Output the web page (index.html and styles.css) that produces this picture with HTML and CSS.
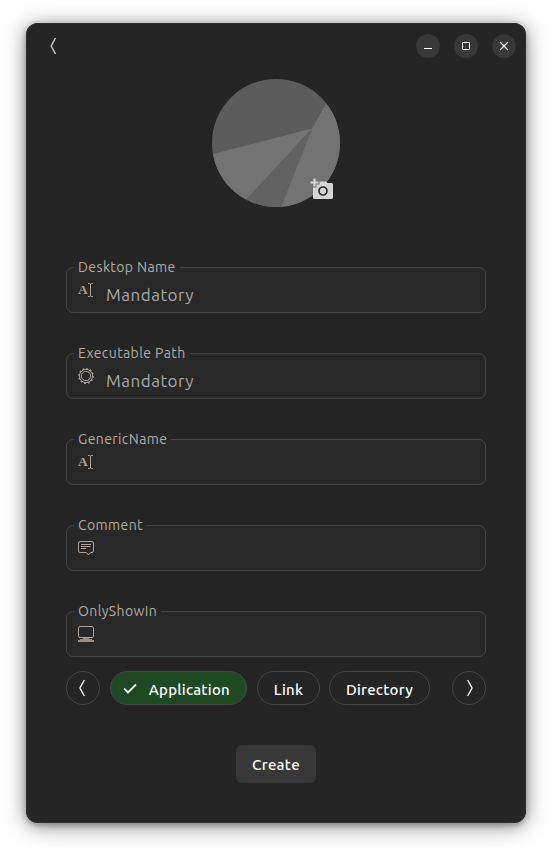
FILE: index.html
```html
<!DOCTYPE html>
<html lang="en">
<head>
<meta charset="utf-8">
<title>Create desktop entry</title>
<link rel="stylesheet" href="styles.css">
</head>
<body>
<main class="window">
  <header class="titlebar">
    <svg class="back" width="16" height="24" viewBox="0 0 16 24"><path d="M11.500 4 7.200 12l4.300 8"/></svg>
    <div class="controls">
      <span class="control"><svg width="24" height="24"><path d="M8 14.500h8"/></svg></span>
      <span class="control"><svg width="24" height="24"><path d="M8.500 8.500h7v7h-7z"/></svg></span>
      <span class="control"><svg width="24" height="24"><path class="cross" d="m8 8 8 8m0-8-8 8"/></svg></span>
    </div>
  </header>
  <div class="avatar">
    <svg width="128" height="128" viewBox="0 0 128 128">
      <defs><clipPath id="disc"><circle cx="64" cy="64" r="64"/></clipPath></defs>
      <g clip-path="url(#disc)">
        <path fill="#5c5c5c" d="M0 0h128v128H0z"/>
        <path fill="#737373" d="M100 49.500-4 76.200V128H28z"/>
        <path fill="#737373" d="M100 49.500 128 0v128H69z"/>
        <path fill="#626262" d="M100 49.500 21.500 134 66 134z"/>
      </g>
    </svg>
    <svg class="camera" width="24" height="22" viewBox="0 0 24 22">
      <path fill="#d4d4d4" d="M9.500 3.500h6.500l1.500 1.500H21.500Q23 5 23 6.500V19.500q0 1.500-1.500 1.500H4.500Q3 21 3 19.500V9.500H6.500V6.500H9.500z"/>
      <circle cx="13" cy="13" r="4" stroke="#2b2b2b" stroke-width="1.700"/>
      <path d="M4.500 .500v8M.500 4.500h8" stroke="#d4d4d4" stroke-width="2.200"/>
    </svg>
  </div>
  <form class="form">
    <fieldset class="field"><legend>Desktop Name</legend>
      <svg class="icon" width="16" height="16"><text class="letter" x="0" y="12">A</text><path d="M10 1.500h1.500q1 0 1 1 0-1 1-1H15M12.500 2v12M10 14.500h1.500q1 0 1-1 0 1 1 1H15"/></svg>
      <span class="value">Mandatory</span></fieldset>
    <fieldset class="field"><legend>Executable Path</legend>
      <svg class="icon" width="16" height="16"><circle cx="8" cy="8" r="4.700"/><circle cx="8" cy="8" r="6.600"/><circle class="teeth" cx="8" cy="8" r="7.200"/></svg>
      <span class="value">Mandatory</span></fieldset>
    <fieldset class="field"><legend>GenericName</legend>
      <svg class="icon" width="16" height="16"><text class="letter" x="0" y="12">A</text><path d="M10 1.500h1.500q1 0 1 1 0-1 1-1H15M12.500 2v12M10 14.500h1.500q1 0 1-1 0 1 1 1H15"/></svg></fieldset>
    <fieldset class="field"><legend>Comment</legend>
      <svg class="icon" width="16" height="16"><path d="M2 1.500h12q1.500 0 1.500 1.500v8q0 1.500-1.500 1.500h-1.500L10.500 15 8.500 12.500H2Q.5 12.500.5 11V3Q.5 1.500 2 1.500zM3 4.500h10M3 6.500h9.500M3 8.500h5"/></svg></fieldset>
    <fieldset class="field"><legend>OnlyShowIn</legend>
      <svg class="icon" width="16" height="16"><path d="M2 .5h12q1.500 0 1.500 1.500v8.500q0 1-1.500 1H2Q.5 11.500.5 10.500V2Q.5.500 2 .5z"/><path class="solid" d="M5 12h6v1H5zM2 13h12v1H2zM0 14h16v2H0z" opacity=".85"/></svg></fieldset>
    <div class="chips">
      <span class="chip round"><svg width="16" height="24" viewBox="0 0 16 24"><path d="M9.300 4 5 12l4.300 8"/></svg></span>
      <span class="chip selected"><svg width="16" height="16"><path class="check" d="m2 8.500 4 4L14 4.500"/></svg><span>Application</span></span>
      <span class="chip link"><span>Link</span></span>
      <span class="chip directory"><span>Directory</span></span>
      <span class="chip round next"><svg width="16" height="24" viewBox="0 0 16 24"><path d="m6.700 4 4.300 8-4.300 8"/></svg></span>
    </div>
    <button class="create" type="button">Create</button>
  </form>
</main>
</body>
</html>
```
FILE: styles.css
```css
* { box-sizing: border-box; }
body { margin: 0; height: 852px; overflow: hidden; background: #fff; font-family: Ubuntu, "Noto Sans", sans-serif; padding: 23px 26px; }
svg { display: block; fill: none; }
.window { width: 500px; height: 800px; border-radius: 12px; background: #252525; box-shadow: inset 0 0 0 1px #303030, 0 2px 6px rgba(0,0,0,.3), 0 3px 22px rgba(0,0,0,.46); }
.titlebar { height: 46px; padding: 0 10px 0 18px; display: flex; align-items: center; justify-content: space-between; }
.back { stroke: #c8c8c8; stroke-width: 1.5; }
.controls { display: flex; gap: 14px; }
.control { width: 24px; height: 24px; border-radius: 50%; background: #383838; stroke: #fff; stroke-width: 1; }
.cross { stroke-width: 1.3; }
.avatar { position: relative; width: 128px; height: 128px; margin: 10px auto 0; }
.camera { position: absolute; left: 98px; top: 99px; }
.form { display: flex; flex-direction: column; padding: 51px 40px 0; }
.field { position: relative; width: 420px; height: 55px; min-width: 0; margin: 0 0 31px; padding: 0 11px; border: 1px solid #444; border-radius: 7px; background: #282828; display: flex; }
.field legend { height: 19px; line-height: 19px; margin-left: -4px; padding: 0 4px; font-size: 14px; letter-spacing: .4px; color: #b2aaa3; white-space: nowrap; }
.icon { position: absolute; left: 11px; top: 5px; stroke: #aaa097; stroke-width: 1; }
.letter { font: bold 13.5px "Liberation Serif", serif; fill: #aaa097; stroke: none; }
.teeth { stroke-dasharray: 1.8 1.97; stroke-width: 1.4; }
.solid { fill: #aaa097; stroke: none; }
.value { margin-left: 28px; margin-top: 6px; font-size: 17px; line-height: 24px; letter-spacing: .5px; color: #a9a9a9; }
.chips { display: flex; height: 34px; margin-top: -17px; color: #fff; }
.chip { height: 34px; border: 1px solid #444; border-radius: 17px; display: flex; align-items: center; justify-content: center; font-size: 15px; font-weight: 500; letter-spacing: .27px; line-height: 20px; white-space: nowrap; }
.chip svg { stroke: #eee; stroke-width: 1.5; flex: none; }
.chip > span { margin-top: 4px; }
.round { width: 34px; }
.selected { width: 137px; margin-left: 10px; background: #1d4a23; padding: 0 16px 0 11px; justify-content: space-between; }
.selected .check { stroke-width: 1.8; }
.link { width: 63px; margin-left: 10px; }
.directory { width: 101px; margin-left: 9px; }
.next { margin-left: auto; }
.create { width: 80px; height: 38px; margin: 40px auto 0; padding: 2px 0 0; border: 0; border-radius: 6px; background: #383838; color: #fff; font: 500 15px/36px Ubuntu, "Noto Sans", sans-serif; letter-spacing: .3px; }
```
